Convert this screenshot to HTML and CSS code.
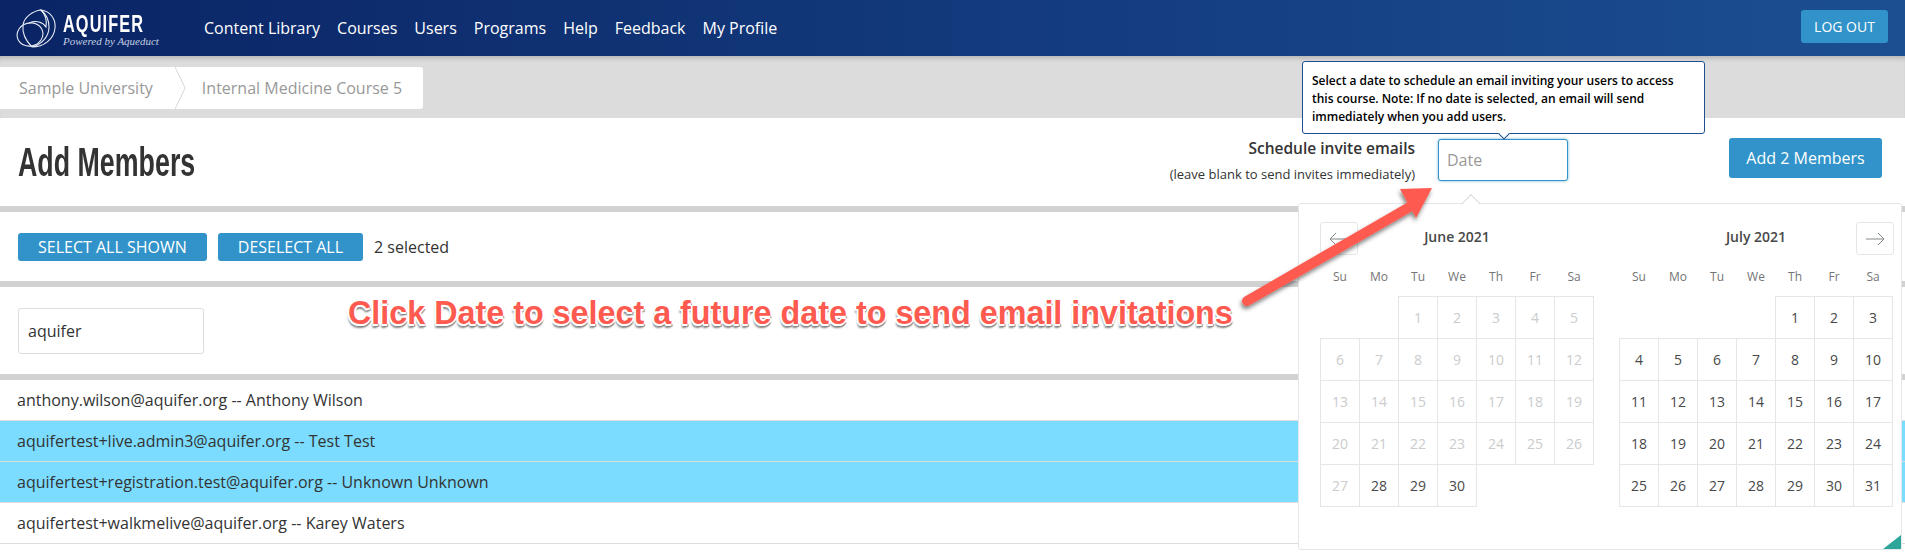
FILE: index.html
```html
<!DOCTYPE html>
<html lang="en">
<head>
  <meta charset="UTF-8" />
  <title>Add Members | Aquifer</title>
  <link rel="stylesheet" href="styles.css">
</head>
<body>
  <header class="topbar">
    <a class="logo" href="#">
      <svg class="logo-mark" viewBox="0 0 40 42" width="40" height="42" fill="none" stroke="#e8edf5" stroke-width="1.1">
        <ellipse cx="14" cy="26.5" rx="13" ry="11.5" transform="rotate(-15 14 26.5)" />
        <path d="M25 2C34 3 40 11 39 20C38 31 28 39 16 39C24 37 33 30 33 19C33 11 30 6 25 2Z" />
        <path d="M25 2C17 3 8 9 7 17C6 26 10 33 16 39M25 2C30 7 31 13 30 19C27 14 20 12 13 15" />
      </svg>
      <span class="logo-text">
        <strong>AQUIFER</strong>
        <em>Powered by Aqueduct</em>
      </span>
    </a>
    <nav class="main-nav">
      <a href="#">Content Library</a>
      <a href="#">Courses</a>
      <a href="#">Users</a>
      <a href="#">Programs</a>
      <a href="#">Help</a>
      <a href="#">Feedback</a>
      <a href="#">My Profile</a>
    </nav>
    <button class="btn btn-logout">LOG OUT</button>
  </header>

  <div class="crumb-band">
    <div class="crumbs">
      <span class="crumb">Sample University</span>
      <svg class="crumb-sep" viewBox="0 0 11 42" width="11" height="42" fill="none" stroke="#d5d5d5"><path d="M0 0L10 21L0 42" /></svg>
      <span class="crumb">Internal Medicine Course 5</span>
    </div>
  </div>

  <section class="title-row">
    <h1>Add Members</h1>
    <div class="schedule">
      <div class="schedule-label">
        <strong>Schedule invite emails</strong>
        <small>(leave blank to send invites immediately)</small>
      </div>
      <input class="date-input" type="text" placeholder="Date" />
    </div>
    <button class="btn btn-add">Add 2 Members</button>
  </section>

  <section class="select-row">
    <button class="btn btn-small">SELECT ALL SHOWN</button>
    <button class="btn btn-small">DESELECT ALL</button>
    <span class="selected-count">2 selected</span>
  </section>

  <section class="search-row">
    <input class="search-input" type="text" value="aquifer" />
  </section>

  <ul class="member-list">
    <li>anthony.wilson@aquifer.org -- Anthony Wilson</li>
    <li class="selected">aquifertest+live.admin3@aquifer.org -- Test Test</li>
    <li class="selected">aquifertest+registration.test@aquifer.org -- Unknown Unknown</li>
    <li>aquifertest+walkmelive@aquifer.org -- Karey Waters</li>
  </ul>

  <div class="tooltip">Select a date to schedule an email inviting your users to access this course. Note: If no date is selected, an email will send immediately when you add users.</div>

  <div class="calendar">
    <button class="cal-nav cal-prev">
      <svg viewBox="0 0 20 14" width="20" height="14" fill="none" stroke="#82888a"><path d="M19 7H1M7 1L1 7L7 13" /></svg>
    </button>
    <button class="cal-nav cal-next">
      <svg viewBox="0 0 20 14" width="20" height="14" fill="none" stroke="#82888a"><path d="M1 7H19M13 1L19 7L13 13" /></svg>
    </button>
    <div class="month">
      <h3>June 2021</h3>
      <table>
        <thead><tr><th>Su</th><th>Mo</th><th>Tu</th><th>We</th><th>Th</th><th>Fr</th><th>Sa</th></tr></thead>
        <tbody>
          <tr><td class="empty"></td><td class="empty"></td><td class="off">1</td><td class="off">2</td><td class="off">3</td><td class="off">4</td><td class="off">5</td></tr>
          <tr><td class="off">6</td><td class="off">7</td><td class="off">8</td><td class="off">9</td><td class="off">10</td><td class="off">11</td><td class="off">12</td></tr>
          <tr><td class="off">13</td><td class="off">14</td><td class="off">15</td><td class="off">16</td><td class="off">17</td><td class="off">18</td><td class="off">19</td></tr>
          <tr><td class="off">20</td><td class="off">21</td><td class="off">22</td><td class="off">23</td><td class="off">24</td><td class="off">25</td><td class="off">26</td></tr>
          <tr><td class="off">27</td><td>28</td><td>29</td><td>30</td><td class="empty"></td><td class="empty"></td><td class="empty"></td></tr>
        </tbody>
      </table>
    </div>
    <div class="month">
      <h3>July 2021</h3>
      <table>
        <thead><tr><th>Su</th><th>Mo</th><th>Tu</th><th>We</th><th>Th</th><th>Fr</th><th>Sa</th></tr></thead>
        <tbody>
          <tr><td class="empty"></td><td class="empty"></td><td class="empty"></td><td class="empty"></td><td>1</td><td>2</td><td>3</td></tr>
          <tr><td>4</td><td>5</td><td>6</td><td>7</td><td>8</td><td>9</td><td>10</td></tr>
          <tr><td>11</td><td>12</td><td>13</td><td>14</td><td>15</td><td>16</td><td>17</td></tr>
          <tr><td>18</td><td>19</td><td>20</td><td>21</td><td>22</td><td>23</td><td>24</td></tr>
          <tr><td>25</td><td>26</td><td>27</td><td>28</td><td>29</td><td>30</td><td>31</td></tr>
        </tbody>
      </table>
    </div>
  </div>

  <!-- screenshot annotation -->
  <svg class="note-arrow" viewBox="0 0 1905 554" width="1905" height="554">
    <defs>
      <filter id="arrowShadow" x="-10%" y="-10%" width="120%" height="120%">
        <feDropShadow dx="-1" dy="3" stdDeviation="2" flood-color="#000" flood-opacity="0.5" />
      </filter>
    </defs>
    <g filter="url(#arrowShadow)">
      <path d="M1247 301L1413 205" stroke="#ff5a4f" stroke-width="10" stroke-linecap="round" fill="none" />
      <path d="M1432 188L1400 189L1416 218Z" fill="#ff5a4f" />
    </g>
  </svg>
  <div class="note-text">Click Date to select a future date to send email invitations</div>
</body>
</html>
```

FILE: styles.css
```css
:root {
  --blue: #3193c9;
  --cell: #e4e7e7;
  --text: #333333;
}

html, body {
  height: 554px;
  overflow: hidden;
}

body {
  position: relative;
  margin: 0;
  background-color: #fff;
  font-family: "Open Sans", sans-serif;
  color: var(--text);
}

.btn {
  border: none;
  border-radius: 3px;
  background-color: var(--blue);
  color: #fff;
  font-family: inherit;
  cursor: pointer;
}

/* top bar */
.topbar {
  display: flex;
  align-items: center;
  height: 56px;
  padding: 0 17px 0 16px;
  box-sizing: border-box;
  background: linear-gradient(90deg, #0a2465, #1b4f92);
}

.logo {
  display: flex;
  flex-shrink: 0;
  align-items: center;
  gap: 7px;
  width: 188px;
  color: #fff;
  text-decoration: none;
}

.logo-mark {
  margin-top: 2px;
}

.logo-text {
  width: 95px;
  margin-top: 3px;
}

/* no condensed face installed, so squeeze the bold one */
.logo-text strong {
  display: block;
  font-family: "Liberation Sans", sans-serif;
  font-size: 24px;
  line-height: 22px;
  letter-spacing: 1.6px;
  transform: scaleX(0.68);
  transform-origin: left center;
}

.logo-text em {
  display: block;
  font-family: "Liberation Serif", serif;
  font-size: 11px;
  line-height: 12px;
  white-space: nowrap;
  color: #c3cfe2;
}

.main-nav {
  display: flex;
  gap: 17px;
}

.main-nav a {
  color: #fff;
  font-size: 16px;
  text-decoration: none;
}

.btn-logout {
  width: 87px;
  height: 33px;
  margin-left: auto;
  margin-top: -3px;
  font-size: 14px;
}

/* breadcrumb */
.crumb-band {
  height: 62px;
  padding-top: 11px;
  box-sizing: border-box;
  background-color: #dcdcdc;
  box-shadow: inset 0 5px 5px -3px rgba(0, 0, 0, 0.2);
}

.crumbs {
  display: flex;
  align-items: center;
  width: 423px;
  height: 42px;
  padding-left: 19px;
  box-sizing: border-box;
  background-color: #fff;
  border-radius: 0 3px 3px 0;
}

.crumb {
  color: #999;
  font-size: 16px;
}

.crumb-sep {
  margin: 0 16px 0 22px;
}

/* title row */
.title-row,
.select-row,
.search-row {
  display: flex;
  align-items: center;
  border-bottom: 6px solid #b9b9b9;
  border-image: linear-gradient(#a9a9a9, #d2d2d2) 1;
}

.title-row {
  height: 88px;
  padding: 0 23px 0 18px;
}

h1 {
  margin: 0;
  font-family: "Liberation Sans", sans-serif;
  font-size: 40px;
  font-weight: 700;
  color: #333;
  white-space: nowrap;
  transform: scaleX(0.67);
  transform-origin: left center;
}

.schedule {
  display: flex;
  align-items: center;
  gap: 23px;
  margin-left: auto;
  margin-right: 161px;
  margin-top: -4px;
}

.schedule-label {
  text-align: right;
}

.schedule-label strong {
  display: block;
  font-size: 15.5px;
  font-weight: 600;
}

.schedule-label small {
  display: block;
  margin-top: 6px;
  font-size: 13px;
}

.date-input {
  width: 130px;
  height: 42px;
  padding: 0 8px;
  box-sizing: border-box;
  border: 1px solid var(--blue);
  border-radius: 3px;
  box-shadow: 0 0 3px rgba(49, 147, 201, 0.7);
  font-family: inherit;
  font-size: 16px;
  outline: none;
}

.date-input::placeholder {
  color: #999;
}

.btn-add {
  width: 153px;
  height: 40px;
  margin-top: -8px;
  font-size: 16px;
}

/* select row */
.select-row {
  height: 69px;
  padding: 0 18px;
}

.btn-small {
  height: 28px;
  padding: 0 20px;
  margin-right: 11px;
  font-size: 16px;
}

.selected-count {
  font-size: 16px;
}

/* search */
.search-row {
  height: 87px;
  padding: 0 18px;
}

.search-input {
  width: 186px;
  height: 46px;
  padding: 0 9px;
  box-sizing: border-box;
  border: 1px solid #ddd;
  border-radius: 3px;
  color: var(--text);
  font-family: inherit;
  font-size: 16px;
}

/* members */
.member-list {
  margin: 0;
  padding: 0;
  list-style: none;
}

.member-list li {
  height: 40px;
  padding-left: 17px;
  border-bottom: 1px solid #ddd;
  font-size: 16px;
  line-height: 40px;
}

.member-list li.selected {
  background-color: #7bdcff;
}

/* tooltip over the date input */
.tooltip {
  position: absolute;
  left: 1302px;
  top: 61px;
  width: 403px;
  height: 73px;
  padding: 10px 9px;
  box-sizing: border-box;
  background-color: #fff;
  border: 1px solid #1d4f91;
  border-radius: 3px;
  color: #000;
  font-size: 12px;
  font-weight: 600;
  line-height: 18px;
  letter-spacing: -0.02px;
}

.tooltip::after {
  content: "";
  position: absolute;
  left: 197px;
  bottom: -5px;
  width: 7px;
  height: 7px;
  background-color: #fff;
  border-right: 1px solid #1d4f91;
  border-bottom: 1px solid #1d4f91;
  transform: rotate(45deg);
}

/* date picker */
.calendar {
  position: absolute;
  left: 1298px;
  top: 203px;
  display: flex;
  gap: 25px;
  width: 604px;
  height: 347px;
  padding: 0 9px 0 21px;
  box-sizing: border-box;
  background-color: #fff;
  border: 1px solid #e4e7e7;
  border-radius: 3px;
}

.calendar::before {
  content: "";
  position: absolute;
  left: 165px;
  top: -7px;
  width: 13px;
  height: 13px;
  background-color: #fff;
  border-left: 1px solid #dbdbdb;
  border-top: 1px solid #dbdbdb;
  transform: rotate(45deg);
}

.calendar::after {
  content: "";
  position: absolute;
  right: 0;
  bottom: 0;
  border-style: solid;
  border-width: 0 0 14px 18px;
  border-color: transparent transparent #2ea59a transparent;
}

.cal-nav {
  position: absolute;
  top: 18px;
  display: flex;
  align-items: center;
  justify-content: center;
  width: 38px;
  height: 33px;
  padding: 0;
  background-color: #fff;
  border: 1px solid var(--cell);
  border-radius: 3px;
}

.cal-prev {
  left: 21px;
}

.cal-next {
  left: 557px;
}

.month {
  width: 274px;
  position: relative;
}

.month h3 {
  height: 23px;
  margin: 23px 0 0;
  font-size: 14px;
  font-weight: 600;
  line-height: 20px;
  text-align: center;
  color: #484848;
}

.month table {
  width: 274px;
  margin-top: 7px;
  table-layout: fixed;
  border-collapse: collapse;
}

.month th {
  height: 39px;
  padding: 0;
  color: #757575;
  font-size: 12px;
  font-weight: 400;
  vertical-align: middle;
}

.month td {
  height: 41px;
  padding: 0;
  border: 1px solid var(--cell);
  color: #484848;
  font-size: 14px;
  text-align: center;
}

.month td.off {
  color: #cacccd;
}

.month td.empty {
  border: none;
}

/* annotation drawn on the screenshot */
.note-arrow {
  position: absolute;
  left: 0;
  top: 0;
  pointer-events: none;
}

.note-text {
  position: absolute;
  left: 348px;
  top: 294px;
  color: #ff5a4f;
  font-family: "Liberation Sans", Arial, sans-serif;
  font-size: 32.3px;
  font-weight: 700;
  line-height: 38px;
  white-space: nowrap;
  text-shadow: -2px 0 0 #fff, 2px 0 0 #fff, 0 -2px 0 #fff, 0 2px 0 #fff, -1px -1px 0 #fff, 1px -1px 0 #fff, -1px 2px 0 #fff, 1px 3px 1px #888, -1px 4px 2px #888;
}
```
